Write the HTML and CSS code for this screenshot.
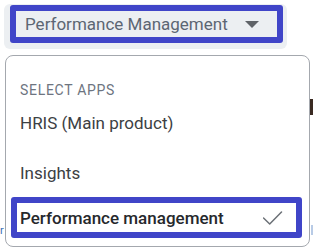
FILE: index.html
```html
<!DOCTYPE html>
<html>
<head>
<meta charset="utf-8">
<link rel="stylesheet" href="styles.css">
</head>
<body>
<div class="screen">
  <div class="trigger">
    <div class="trigger-inner">
      <span class="trigger-label">Performance Management</span>
      <span class="caret"></span>
    </div>
  </div>

  <div class="backdrop">
    <div class="bd-row bd-dark"><span class="dark-chip"></span></div>
    <div class="bd-row bd-link"><span class="link-tail">r</span><span class="link-chip"></span></div>
  </div>

  <div class="menu">
    <div class="menu-header">SELECT APPS</div>
    <div class="menu-item item-hris">HRIS (Main product)</div>
    <div class="menu-item item-insights">Insights</div>
    <div class="menu-item selected">
      <span class="selected-label">Performance management</span>
      <svg class="check" width="20" height="15" viewBox="0 0 20 15">
        <polyline points="0.5,7 6.7,13 18.5,1" fill="none" stroke="#6b7076" stroke-width="1.5" stroke-linecap="round" stroke-linejoin="round"/>
      </svg>
    </div>
  </div>
</div>
</body>
</html>
```

FILE: styles.css
```css
html, body {
  margin: 0;
  padding: 0;
  background: #ffffff;
}

body {
  font-family: Roboto, "Liberation Sans", Arial, sans-serif;
}

.screen {
  position: relative;
  width: 313px;
  height: 251px;
  overflow: hidden;
}

.trigger {
  margin: 4px 0 0 4px;
  width: 283px;
  height: 45px;
  box-sizing: border-box;
  padding: 1px 4px 6px 6px;
  background: #eceff2;
  border-radius: 6px;
}

.trigger-inner {
  height: 38px;
  box-sizing: border-box;
  border: 6px solid #4045c8;
  border-radius: 3px;
  display: flex;
  align-items: center;
  padding: 0 18px 0 9px;
}

.trigger-label {
  font-size: 17px;
  color: #5c6673;
  line-height: 20px;
}

.caret {
  margin-left: auto;
  width: 0;
  height: 0;
  border-left: 7px solid transparent;
  border-right: 7px solid transparent;
  border-top: 7px solid #5f6368;
  margin-top: 1px;
}

.backdrop {
  padding-top: 50px;
}

.bd-row {
  display: flex;
}

.bd-dark {
  justify-content: flex-end;
  height: 16px;
}

.dark-chip {
  width: 3px;
  height: 16px;
  background: #3a2a22;
}

.bd-link {
  margin-top: 110px;
  height: 12px;
  justify-content: space-between;
}

.link-tail {
  font-size: 11px;
  line-height: 12px;
  color: #3b6fb6;
}

.link-chip {
  width: 2px;
  height: 10px;
  background: #b8cbe6;
}

.menu {
  position: absolute;
  left: 5px;
  top: 55px;
  width: 305px;
  height: 192px;
  box-sizing: border-box;
  border: 1px solid #a4a8ae;
  border-radius: 8px;
  background: #ffffff;
  display: flex;
  flex-direction: column;
}

.menu-header {
  padding: 26px 0 0 14px;
  height: 42px;
  box-sizing: border-box;
  font-size: 14px;
  line-height: 16px;
  letter-spacing: 0.7px;
  color: #6d7480;
}

.menu-item {
  display: flex;
  align-items: center;
  padding-left: 14px;
  font-size: 17px;
  color: #3c4043;
}

.item-hris {
  height: 50px;
}

.item-insights {
  height: 49px;
}

.selected {
  height: 41px;
  box-sizing: border-box;
  margin: 0 7px 0 5px;
  border: 6px solid #4045c8;
  border-radius: 3px;
  padding: 0 13px 0 3px;
  justify-content: space-between;
}

.selected-label {
  font-weight: 500;
  color: #26282c;
}

.check {
  display: block;
  margin-top: 1px;
}
```
